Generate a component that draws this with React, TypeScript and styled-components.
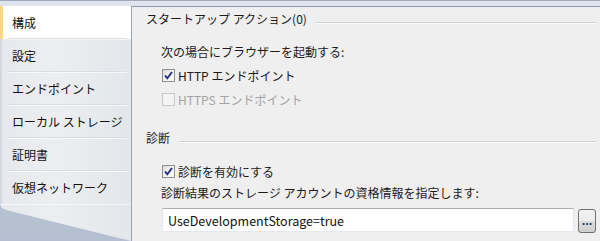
import React from "react";
import styled, { createGlobalStyle } from "styled-components";

const Global = createGlobalStyle`
  html, body { margin: 0; padding: 0; }
  body {
    width: 600px;
    height: 241px;
    overflow: hidden;
    font-family: "Noto Sans CJK JP", "Noto Sans", sans-serif;
    font-size: 12px;
    color: #1a1a1a;
    background: #f0eff0;
  }
`;

const Frame = styled.div`
  width: 600px;
  height: 241px;
  display: flex;
  flex-direction: column;
  overflow: hidden;
`;

const TopBar = styled.div`
  height: 5px;
  border-top: 1px solid #9fa9bb;
  background: #dfe4ec;
  flex: none;
`;

const Main = styled.div`
  flex: 1;
  display: flex;
  min-height: 0;
`;

const Sidebar = styled.nav`
  width: 131px;
  flex: none;
  display: flex;
  flex-direction: column;
  background: linear-gradient(180deg, #c3ccd9 0%, #b4c0d1 100%);
`;

const TabList = styled.div`
  display: flex;
  flex-direction: column;
  background: linear-gradient(90deg, #e6e8ec 0%, #eceef1 40%, #e3e6ea 100%);
  border-left: 2px solid #d3d7de;
`;

const Tab = styled.div<{ $active?: boolean }>`
  height: 33px;
  box-sizing: border-box;
  display: flex;
  align-items: center;
  padding-left: ${(p) => (p.$active ? "9px" : "10px")};
  margin-left: ${(p) => (p.$active ? "-2px" : "0")};
  border-left: ${(p) => (p.$active ? "3px solid #f7d77f" : "none")};
  background: ${(p) => (p.$active ? "#ffffff" : "transparent")};
  color: #111;
  font-size: 12px;
  position: relative;
  &:not(:last-child)::after {
    content: "";
    position: absolute;
    left: 5px;
    right: 4px;
    bottom: 0;
    height: 1px;
    background: #d9dce2;
    box-shadow: 0 1px 0 #f7f8fa;
  }
`;

const Tail = styled.div`
  flex: 1;
  background: linear-gradient(90deg, #e6e8ec 0%, #eceef1 40%, #e3e6ea 100%);
  clip-path: polygon(0 0, 100% 0, 100% 100%, 6px 6px, 2px 4px);
  border-top: 1px solid #f5f6f8;
`;

const Content = styled.section`
  flex: 1;
  border-left: 1px solid #9aa3b1;
  border-top: 1px solid #8e9bb1;
  background: #f0eff0;
  padding: 4px 4px 0 14px;
  display: flex;
  flex-direction: column;
`;

const SectionHeader = styled.div<{ $top: number }>`
  display: flex;
  align-items: center;
  gap: 9px;
  height: 16px;
  line-height: 16px;
  margin-top: ${(p) => p.$top}px;
  color: #1a1a1a;
`;

const HeaderRule = styled.div`
  flex: 1;
  height: 1px;
  margin-top: 6px;
  background: #cfd0d5;
  box-shadow: 0 1px 0 #fbfbfb;
`;

const Group = styled.div`
  padding-left: 15px;
  display: flex;
  flex-direction: column;
`;

const Label = styled.div<{ $top: number }>`
  height: 16px;
  line-height: 16px;
  margin-top: ${(p) => p.$top}px;
`;

const CheckRow = styled.label<{ $disabled?: boolean; $top?: number }>`
  height: 24px;
  display: flex;
  align-items: center;
  gap: 3px;
  padding-left: 1px;
  margin-top: ${(p) => p.$top ?? 0}px;
  color: ${(p) => (p.$disabled ? "#a3a3a3" : "#1a1a1a")};
`;

const Box = styled.span<{ $disabled?: boolean }>`
  width: 13px;
  height: 13px;
  box-sizing: border-box;
  border: 1px solid ${(p) => (p.$disabled ? "#c9c9c9" : "#8e8f8f")};
  background: ${(p) =>
    p.$disabled
      ? "#f4f4f4"
      : "linear-gradient(135deg, #dcdcdc 0%, #f6f6f6 60%, #ffffff 100%)"};
  display: flex;
  align-items: center;
  justify-content: center;
  flex: none;
`;

const InputRow = styled.div`
  display: flex;
  gap: 4px;
  margin-top: 7px;
  padding-left: 1px;
`;

const TextBox = styled.div`
  flex: 1;
  height: 24px;
  box-sizing: border-box;
  background: #fff;
  border: 1px solid #e2e8ee;
  border-top-color: #abadb3;
  padding-left: 5px;
  display: flex;
  align-items: center;
  color: #111;
  font-size: 12.5px;
`;

const BrowseButton = styled.button`
  width: 18px;
  height: 24px;
  margin-top: 1px;
  box-sizing: border-box;
  padding: 0;
  border: 1px solid #707070;
  border-radius: 3px;
  background: linear-gradient(180deg, #f3f3f3 0%, #ebebeb 50%, #dddddd 51%, #cfcfcf 100%);
  font-family: "Noto Sans CJK JP", sans-serif;
  font-size: 11px;
  font-weight: bold;
  line-height: 1;
  color: #1f2f5a;
  display: flex;
  align-items: flex-end;
  justify-content: center;
  padding-bottom: 6px;
`;

const Check = () => (
  <svg width="9" height="9" viewBox="0 0 9 9">
    <path d="M1 4.5 L3.3 7.2 L8 1" fill="none" stroke="#1e2d86" strokeWidth="1.9" />
  </svg>
);

const tabs = ["構成", "設定", "エンドポイント", "ローカル ストレージ", "証明書", "仮想ネットワーク"];

export default function App() {
  return (
    <Frame>
      <Global />
      <TopBar />
      <Main>
        <Sidebar>
          <TabList>
            {tabs.map((t, i) => (
              <Tab key={t} $active={i === 0}>
                {t}
              </Tab>
            ))}
          </TabList>
          <Tail />
        </Sidebar>
        <Content>
          <SectionHeader $top={0}>
            <span>スタートアップ アクション(0)</span>
            <HeaderRule />
          </SectionHeader>
          <Group>
            <Label $top={17}>次の場合にブラウザーを起動する:</Label>
            <CheckRow $top={3}>
              <Box>
                <Check />
              </Box>
              HTTP エンドポイント
            </CheckRow>
            <CheckRow $disabled>
              <Box $disabled />
              HTTPS エンドポイント
            </CheckRow>
          </Group>
          <SectionHeader $top={19}>
            <span>診断</span>
            <HeaderRule />
          </SectionHeader>
          <Group>
            <CheckRow $top={13}>
              <Box>
                <Check />
              </Box>
              診断を有効にする
            </CheckRow>
            <Label $top={2}>診断結果のストレージ アカウントの資格情報を指定します:</Label>
            <InputRow>
              <TextBox>UseDevelopmentStorage=true</TextBox>
              <BrowseButton>...</BrowseButton>
            </InputRow>
          </Group>
        </Content>
      </Main>
    </Frame>
  );
}
